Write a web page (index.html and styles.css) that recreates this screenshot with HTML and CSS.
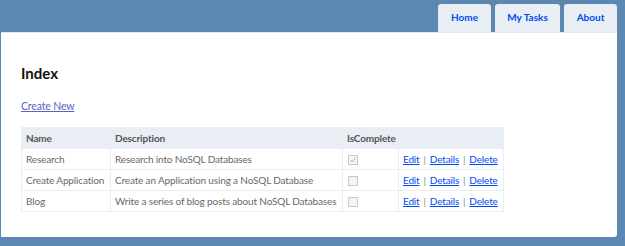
FILE: index.html
```html
<!DOCTYPE html>
<html>
<head>
<meta charset="utf-8">
<link rel="stylesheet" href="styles.css">
</head>
<body>
<div class="page">
  <header class="header">
    <div class="title">My MVC Application</div>
    <nav class="menu">
      <a class="tab tab-home" href="#">Home</a>
      <a class="tab tab-tasks" href="#">My Tasks</a>
      <a class="tab tab-about" href="#">About</a>
    </nav>
  </header>
  <main class="main">
    <h2 class="heading">Index</h2>
    <p class="create"><a class="create-link" href="#">Create New</a></p>
    <table class="grid">
      <colgroup>
        <col class="c-name">
        <col class="c-desc">
        <col class="c-done">
        <col class="c-act">
      </colgroup>
      <thead>
        <tr>
          <th>Name</th>
          <th>Description</th>
          <th>IsComplete</th>
          <th></th>
        </tr>
      </thead>
      <tbody>
        <tr>
          <td>Research</td>
          <td>Research into NoSQL Databases</td>
          <td><span class="check"><svg width="10" height="10" viewBox="0 0 10 10"><path d="M2.5 5.2 L4.2 7 L7.6 2.6" fill="none" stroke="#b4b4b4" stroke-width="1"/></svg></span></td>
          <td><a href="#">Edit</a> <span class="sep">|</span> <a href="#">Details</a> <span class="sep">|</span> <a href="#">Delete</a></td>
        </tr>
        <tr>
          <td>Create Application</td>
          <td>Create an Application using a NoSQL Database</td>
          <td><span class="check"></span></td>
          <td><a href="#">Edit</a> <span class="sep">|</span> <a href="#">Details</a> <span class="sep">|</span> <a href="#">Delete</a></td>
        </tr>
        <tr>
          <td>Blog</td>
          <td>Write a series of blog posts about NoSQL Databases</td>
          <td><span class="check"></span></td>
          <td><a href="#">Edit</a> <span class="sep">|</span> <a href="#">Details</a> <span class="sep">|</span> <a href="#">Delete</a></td>
        </tr>
      </tbody>
    </table>
  </main>
</div>
</body>
</html>
```
FILE: styles.css
```css
html, body {
  margin: 0;
  padding: 0;
}
body {
  background: #5c87b2;
  font-family: "Lato", "Open Sans", sans-serif;
  font-size: 10px;
  letter-spacing: -0.15px;
  color: #696969;
  width: 625px;
  height: 246px;
  overflow: hidden;
}
.page {
  display: flex;
  flex-direction: column;
}
.header {
  height: 32px;
  display: flex;
  justify-content: space-between;
  align-items: flex-end;
  padding: 0 8px 0 1px;
  overflow: hidden;
}
.title {
  align-self: flex-start;
  margin-top: -25px;
  margin-left: 0;
  color: #fff;
  font-family: "Liberation Sans", sans-serif;
  font-weight: bold;
  font-size: 21px;
  line-height: 24px;
  letter-spacing: 0;
}
.menu {
  display: flex;
  gap: 4px;
}
.tab {
  height: 28px;
  display: flex;
  align-items: center;
  justify-content: center;
  padding-bottom: 2px;
  box-sizing: border-box;
  background: #e8eef4;
  color: #034af3;
  font-weight: bold;
  font-size: 10px;
  letter-spacing: 0;
  text-decoration: none;
  border-radius: 3px 3px 0 0;
}
.tab-home { width: 53px; }
.tab-tasks { width: 65px; }
.tab-about { width: 53px; }
.main {
  background: #fff;
  margin: 0 8px 0 1px;
  height: 205px;
  padding: 0 20px;
  border-top: 1px solid #dfe7f0;
  border-radius: 0 0 3px 0;
  box-sizing: border-box;
}
.heading {
  margin: 31px 0 0;
  font-size: 15px;
  line-height: 18px;
  font-weight: bold;
  letter-spacing: 0;
  color: #111;
}
.create {
  margin: 17px 0 0;
  line-height: 14px;
  font-size: 10.5px;
}
.create-link {
  color: #5a63c8;
}
.grid {
  margin-top: 14px;
  width: 482px;
  table-layout: fixed;
  border-collapse: collapse;
  border: 1px solid #e8eef4;
}
.c-name { width: 89px; }
.c-desc { width: 232px; }
.c-done { width: 56px; }
.c-act { width: 105px; }
.grid th, .grid td {
  border: 1px solid #e8eef4;
  height: 21px;
  padding: 0 4px;
  box-sizing: border-box;
  text-align: left;
  white-space: nowrap;
  overflow: hidden;
}
.grid th {
  background: #e8eef4;
  color: #555;
  font-weight: bold;
}
.grid a {
  color: #034af3;
}
.sep {
  color: #888;
  margin: 0 1.5px;
}
.check {
  display: inline-block;
  width: 10px;
  height: 10px;
  border: 1px solid #c9c9c9;
  background: #f4f4f4;
  box-sizing: border-box;
  vertical-align: middle;
  margin-left: 1px;
  position: relative;
}
.check svg {
  position: absolute;
  left: -1px;
  top: -1px;
}
```
